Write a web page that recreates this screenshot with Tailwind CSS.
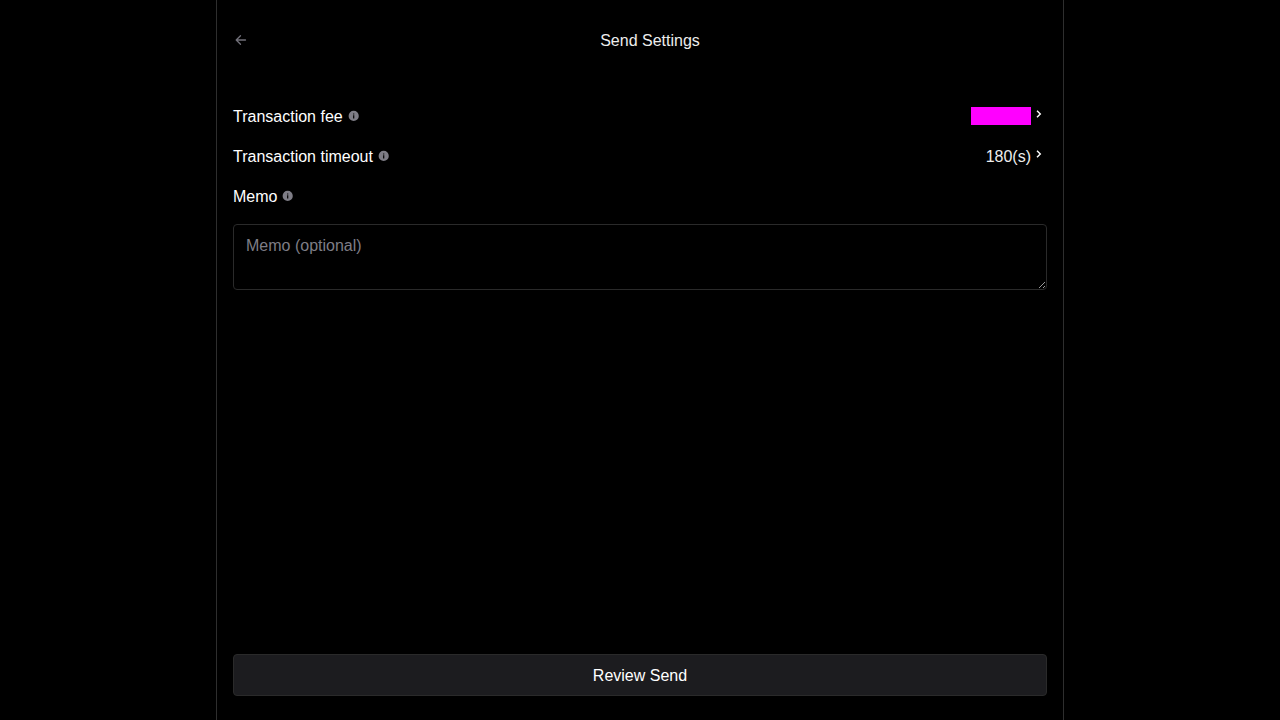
<!DOCTYPE html>
<html lang="en">
<head>
<meta charset="utf-8">
<title>Send Settings</title>
<script src="https://cdn.jsdelivr.net/npm/@tailwindcss/browser@4"></script>
</head>
<body class="bg-black">
<svg class="hidden">
  <symbol id="info" viewBox="0 0 12 12"><path fill-rule="evenodd" d="M5.700.800a5.100 5.100 0 1 0 0 10.200 5.100 5.100 0 0 0 0-10.200zm-.6 2.600h1.200v1H5.100zm0 1.800h1.200v3.200H5.100z"/></symbol>
  <symbol id="chevron" viewBox="0 0 12 12"><path d="M2 2.700l3.300 3.300L2 9.300" fill="none" stroke="currentColor" stroke-width="1.400"/></symbol>
</svg>
<main class="mx-auto flex h-screen w-[848px] flex-col border-x border-[#2e2e2e] bg-black px-4 pb-6 text-[16px] leading-6 text-[#ededed] font-['Liberation_Sans',sans-serif]">
  <header class="flex h-20 items-center">
    <svg class="h-4 w-4 text-[#706f78]" viewBox="0 0 16 16" fill="none" stroke="currentColor" stroke-width="1.300" stroke-linecap="round" stroke-linejoin="round"><path d="M12.500 8H3.200M7.500 12.300L3.200 8l4.300-4.300"/></svg>
    <h1 class="flex-1 pt-0.5 pl-1 text-center">Send Settings</h1>
  </header>
  <section class="flex flex-col gap-4 pt-6 text-white">
    <div class="flex h-6 items-center justify-between">
      <div class="flex items-center gap-[5px]"><span class="pt-0.5">Transaction fee</span><svg class="h-3 w-3 fill-[#7e7d86]"><use href="#info"/></svg></div>
      <div class="flex items-center gap-1"><div class="h-[18px] w-[60px] bg-[#ff00ff]"></div><svg class="mb-1 h-3 w-3"><use href="#chevron"/></svg></div>
    </div>
    <div class="flex h-6 items-center justify-between">
      <div class="flex items-center gap-[5px]"><span class="pt-0.5">Transaction timeout</span><svg class="h-3 w-3 fill-[#7e7d86]"><use href="#info"/></svg></div>
      <div class="flex items-center gap-1"><span class="pt-0.5 text-[#ededed]">180(s)</span><svg class="mb-1 h-3 w-3"><use href="#chevron"/></svg></div>
    </div>
    <div class="flex h-6 items-center gap-[5px]"><span class="pt-0.5">Memo</span><svg class="h-3 w-3 fill-[#7e7d86]"><use href="#info"/></svg></div>
    <textarea class="h-[66px] w-full rounded border border-[#2a2a2a] bg-black px-3 pt-[9px] pb-2 placeholder:text-[#7e7d86] [color-scheme:dark]" placeholder="Memo (optional)"></textarea>
  </section>
  <button class="mt-auto h-[42px] w-full rounded border border-[#2a2a2a] bg-[#1c1c1f] pt-0.5 text-white">Review Send</button>
</main>
</body>
</html>
